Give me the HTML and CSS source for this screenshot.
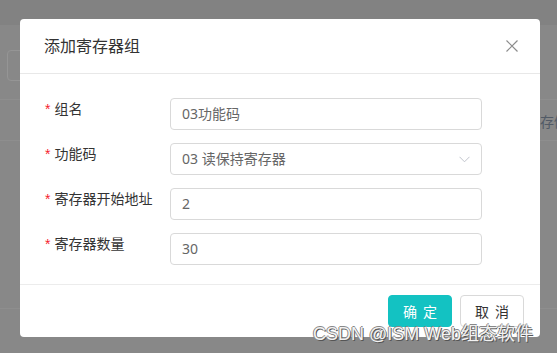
FILE: index.html
```html
<!DOCTYPE html>
<html lang="zh-CN">
<head>
<meta charset="utf-8">
<title>添加寄存器组</title>
<link rel="stylesheet" href="styles.css">
</head>
<body>
<div class="page">
  <div class="page-top"></div>
  <div class="page-toolbar"><div class="page-search"></div></div>
  <div class="page-thead"><span class="page-th">存储</span></div>
  <div class="page-tbody"></div>
</div>

<div class="dialog">
  <div class="dialog-header">
    <span class="dialog-title">添加寄存器组</span>
    <svg class="dialog-close" width="12" height="12" viewBox="0 0 12 12"><path d="M0.5 0.5 L11.5 11.5 M11.5 0.5 L0.5 11.5" stroke="#8c8c8c" stroke-width="1.2" fill="none"/></svg>
  </div>
  <div class="dialog-body">
    <div class="form-row">
      <label class="form-label"><span class="req">*</span>组名</label>
      <div class="form-input">03功能码</div>
    </div>
    <div class="form-row">
      <label class="form-label"><span class="req">*</span>功能码</label>
      <div class="form-input form-select"><span>03 读保持寄存器</span>
        <svg width="11" height="7" viewBox="0 0 11 7"><path d="M0.5 0.8 L5.5 5.8 L10.5 0.8" stroke="#c0c4cc" stroke-width="1" fill="none"/></svg>
      </div>
    </div>
    <div class="form-row">
      <label class="form-label"><span class="req">*</span>寄存器开始地址</label>
      <div class="form-input">2</div>
    </div>
    <div class="form-row">
      <label class="form-label"><span class="req">*</span>寄存器数量</label>
      <div class="form-input">30</div>
    </div>
  </div>
  <div class="dialog-footer">
    <button class="btn btn-primary">确 定</button>
    <button class="btn">取 消</button>
  </div>
</div>

<div class="watermark">CSDN @ISM Web组态软件</div>
</body>
</html>
```
FILE: styles.css
```css
html, body {
  margin: 0;
  padding: 0;
}
body {
  width: 557px;
  height: 353px;
  overflow: hidden;
  position: relative;
  background: #888888;
  font-family: "Noto Sans", "Noto Sans CJK SC", sans-serif;
}
.page-top {
  height: 25px;
  background: #828282;
}
.page-toolbar {
  height: 75px;
  box-sizing: border-box;
  padding: 25px 0 0 7px;
  border-bottom: 1px solid #8e8e8e;
}
.page-search {
  width: 200px;
  height: 31px;
  box-sizing: border-box;
  border: 1px solid #959595;
  border-radius: 4px;
}
.page-thead {
  height: 41px;
  box-sizing: border-box;
  padding-left: 540px;
  white-space: nowrap;
  overflow: hidden;
  line-height: 42px;
  border-bottom: 1px solid #8e8e8e;
}
.page-th {
  font-size: 14px;
  color: #515a66;
}
.page-tbody {
  height: 167px;
  border-bottom: 1px solid #8e8e8e;
}

.dialog {
  position: absolute;
  left: 20px;
  top: 19px;
  width: 520px;
  height: 318px;
  background: #fff;
  border-radius: 4px;
  display: flex;
  flex-direction: column;
}
.dialog-header {
  height: 55px;
  box-sizing: border-box;
  border-bottom: 1px solid #e8e8e8;
  display: flex;
  align-items: center;
  justify-content: space-between;
  padding: 0 22px 0 24px;
}
.dialog-title {
  font-size: 16px;
  color: #333;
  line-height: 22px;
}
.dialog-close {
  display: block;
}
.dialog-body {
  padding: 24px 58px 6px 25px;
  border-bottom: 1px solid #ececec;
}
.form-row {
  display: flex;
  margin-bottom: 13px;
}
.form-label {
  width: 125px;
  flex: none;
  font-size: 14px;
  line-height: 22px;
  color: #333;
}
.req {
  color: #f5222d;
  margin-right: 4px;
  font-family: "Liberation Sans", sans-serif;
  font-size: 14px;
}
.form-input {
  flex: 1;
  height: 32px;
  box-sizing: border-box;
  border: 1px solid #d9d9d9;
  border-radius: 4px;
  padding: 0 11px;
  font-size: 14px;
  line-height: 30px;
  color: #666;
}
.form-select {
  display: flex;
  align-items: center;
  justify-content: space-between;
}
.form-select svg {
  display: block;
}
.dialog-footer {
  display: flex;
  justify-content: flex-end;
  gap: 8px;
  padding: 10px 16px 10px 0;
}
.btn {
  width: 64px;
  height: 32px;
  box-sizing: border-box;
  border: 1px solid #d9d9d9;
  border-radius: 4px;
  background: #fff;
  color: #333;
  font-family: "Noto Sans CJK SC", sans-serif;
  font-size: 14px;
  word-spacing: 3px;
  padding: 0;
}
.btn-primary {
  background: #13c2c2;
  border-color: #13c2c2;
  color: #fff;
}
.watermark {
  position: absolute;
  left: 313px;
  top: 323px;
  font-family: "Liberation Sans", "Noto Sans CJK SC", sans-serif;
  font-size: 18px;
  line-height: 22px;
  color: #f2f2f2;
  white-space: nowrap;
  text-shadow: 1px 1px 0 #555, -1px 0 0 #888, 0 -1px 0 #888;
}
```
